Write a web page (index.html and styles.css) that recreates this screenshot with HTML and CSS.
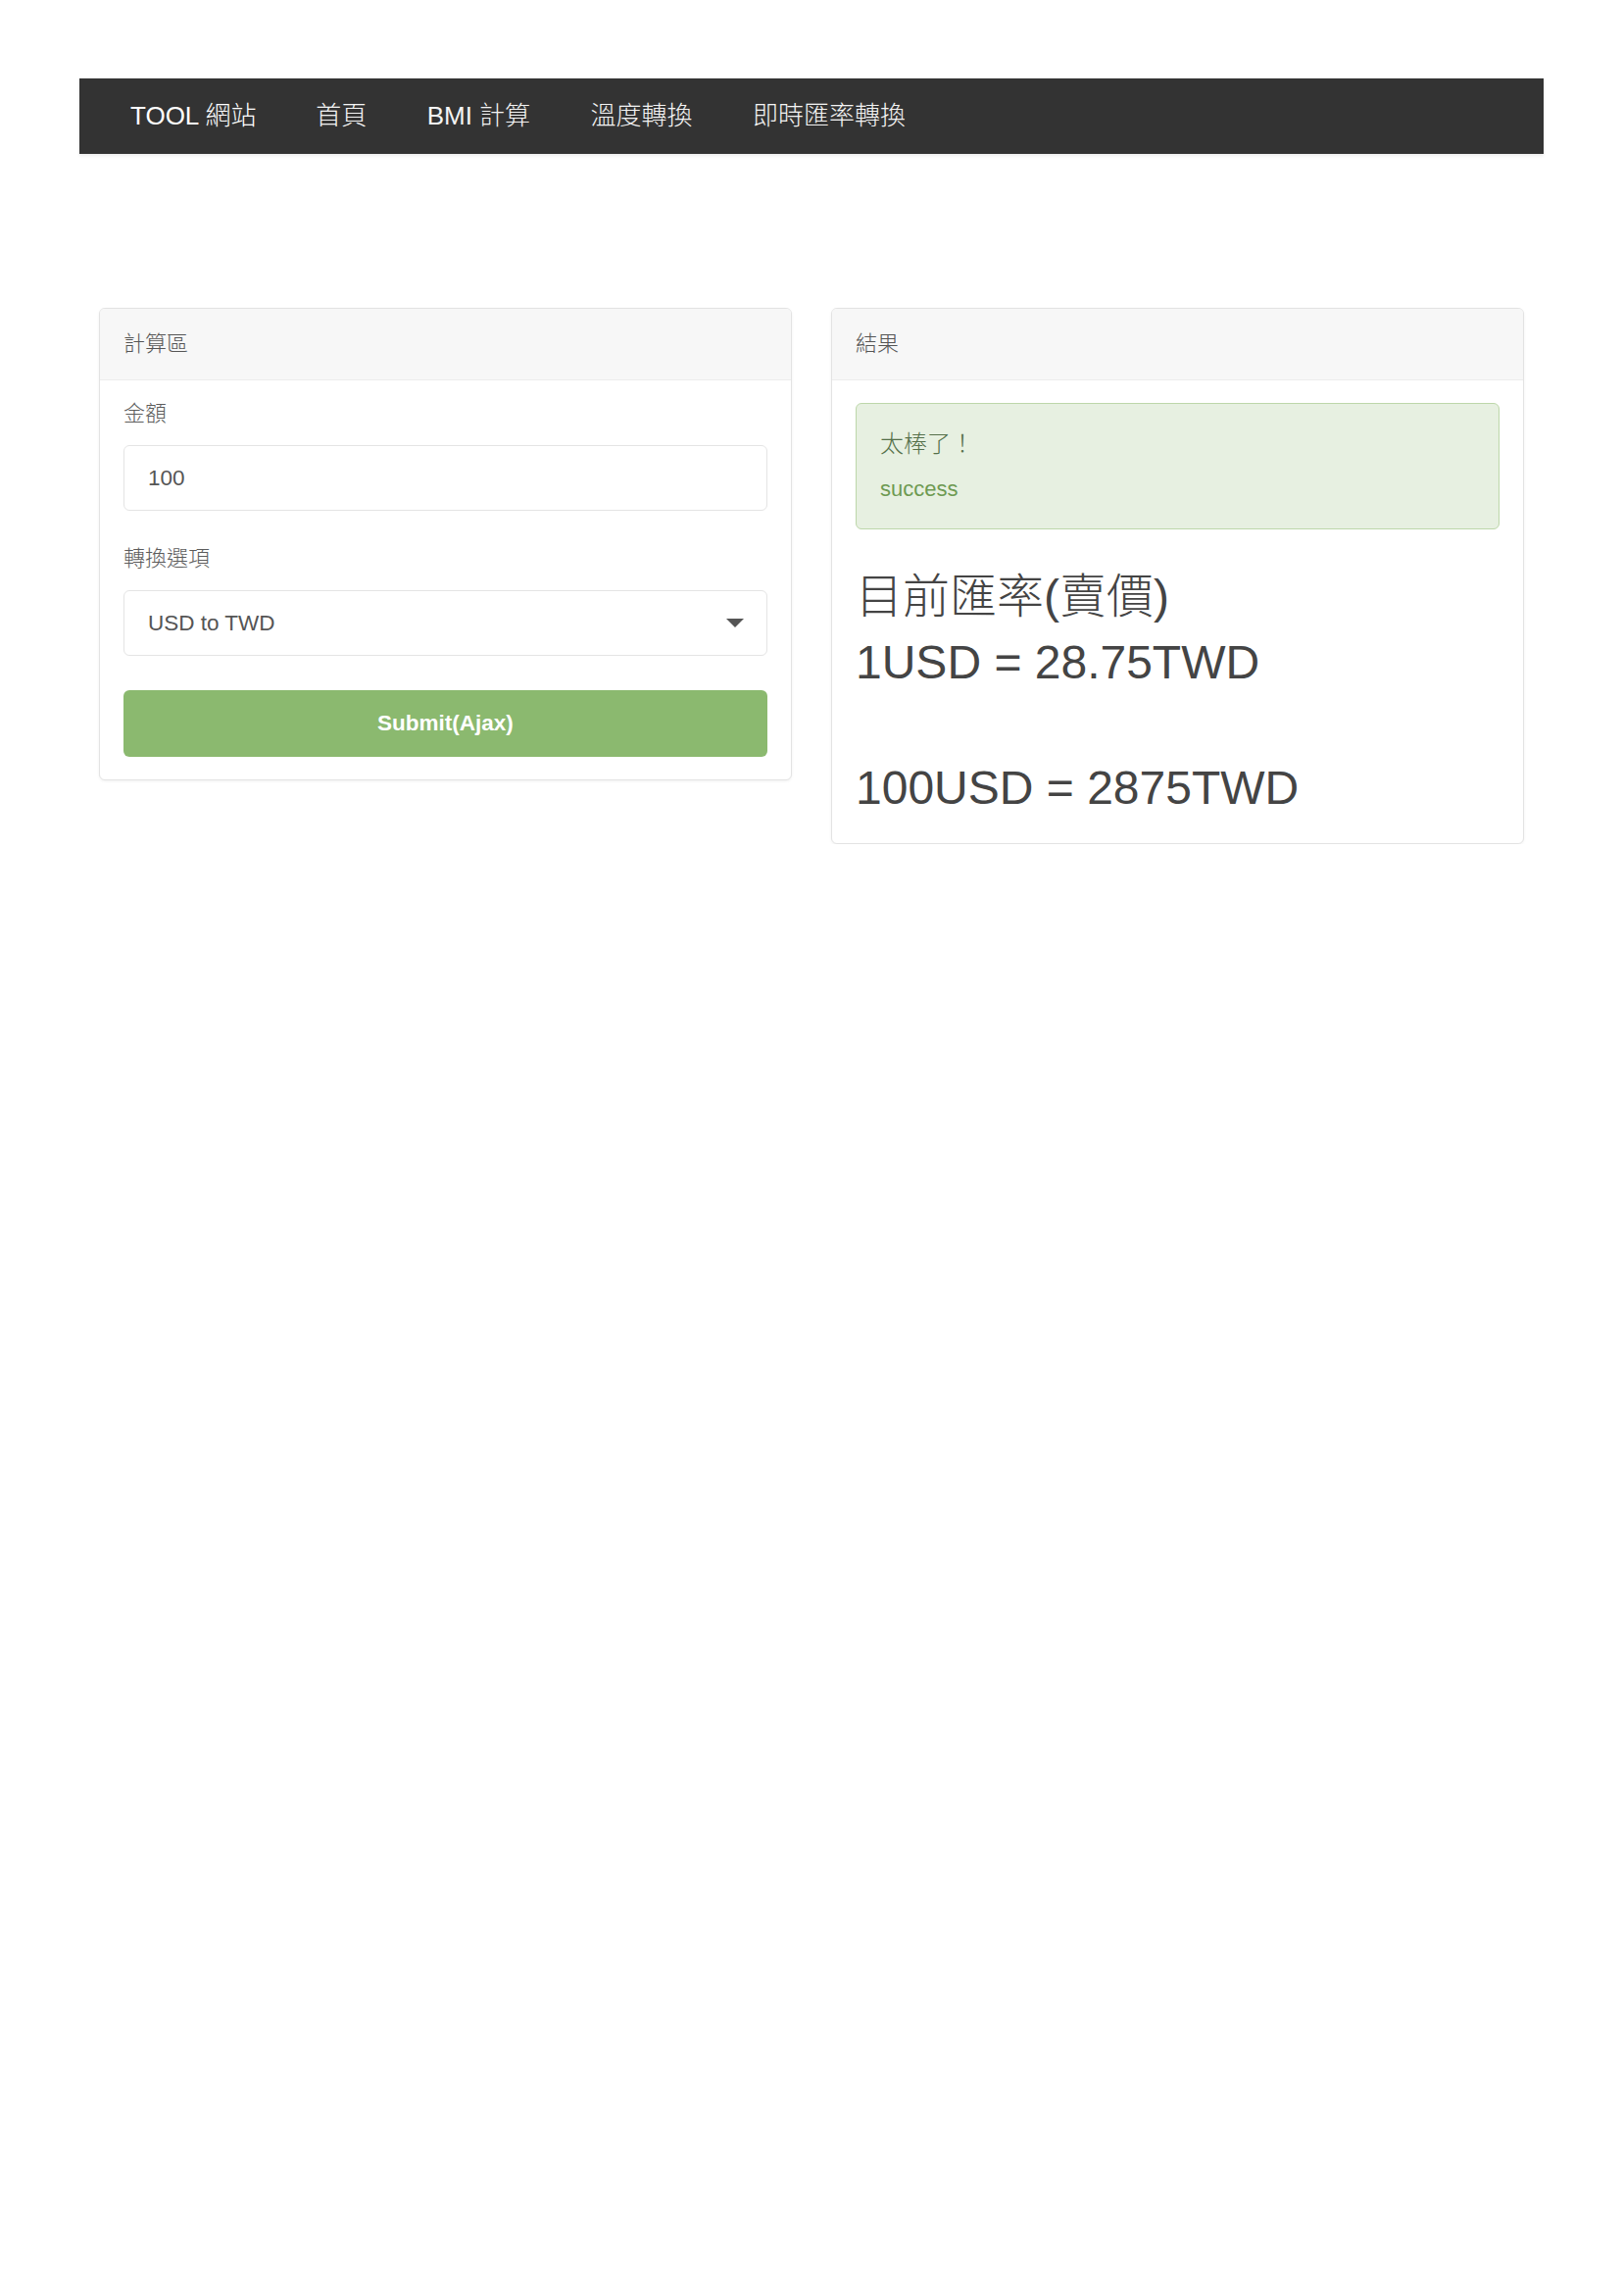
FILE: index.html
```html
<!DOCTYPE html>
<html lang="zh-Hant">
<head>
<meta charset="utf-8">
<title>即時匯率轉換</title>
<link rel="stylesheet" href="styles.css">
</head>
<body>
<nav class="navbar">
  <a class="nav-item brand" href="#">TOOL 網站</a>
  <a class="nav-item" href="#">首頁</a>
  <a class="nav-item" href="#">BMI 計算</a>
  <a class="nav-item" href="#">溫度轉換</a>
  <a class="nav-item" href="#">即時匯率轉換</a>
</nav>

<main class="content">
  <div class="col">
    <section class="panel">
      <div class="panel-heading">計算區</div>
      <div class="panel-body form-body">
        <div class="form-group">
          <label class="form-label" for="amount">金額</label>
          <input class="form-control" id="amount" type="text" value="100">
        </div>
        <div class="form-group">
          <label class="form-label" for="opt">轉換選項</label>
          <div class="select-wrap">
            <select class="form-control select" id="opt">
              <option>USD to TWD</option>
              <option>TWD to USD</option>
            </select>
            <span class="caret"></span>
          </div>
        </div>
        <button class="btn" type="button">Submit(Ajax)</button>
      </div>
    </section>
  </div>
  <div class="col">
    <section class="panel">
      <div class="panel-heading">結果</div>
      <div class="panel-body">
        <div class="alert">
          <h4 class="alert-title">太棒了！</h4>
          <p class="alert-text">success</p>
        </div>
        <div class="rate">
          <div class="rate-title">目前匯率(賣價)</div>
          <div>1USD = 28.75TWD<br><br>100USD = 2875TWD</div>
        </div>
      </div>
    </section>
  </div>
</main>
</body>
</html>
```

FILE: styles.css
```css
* { box-sizing: border-box; }

body {
  margin: 0;
  background: #fff;
  color: #333;
  font-family: "Liberation Sans", "Noto Sans CJK TC", sans-serif;
  font-weight: 300;
}

.navbar {
  width: 1494px;
  height: 77px;
  margin: 80px auto 0;
  padding: 0 22px;
  background: #333;
  display: flex;
  align-items: center;
  box-shadow: 0 2px 3px rgba(0, 0, 0, 0.08);
}

.nav-item {
  font-size: 26px;
  line-height: 77px;
  padding: 0 30.7px;
  color: #f4f4f4;
  text-decoration: none;
}

.nav-item.brand { color: #fff; padding-left: 30px; padding-right: 30px; }

.content {
  width: 1494px;
  margin: 157px auto 0;
  display: grid;
  grid-template-columns: 1fr 1fr;
  align-items: start;
}

.col { padding: 0 20px; }

.panel {
  background: #fff;
  border: 1px solid #e3e3e3;
  border-radius: 6px;
  box-shadow: 0 1px 3px rgba(0, 0, 0, 0.06);
  overflow: hidden;
}

.panel-heading {
  background: #f7f7f7;
  border-bottom: 1px solid #ececec;
  padding: 20px 24px;
  font-size: 22px;
  line-height: 32px;
  color: #555;
}

.panel-body { padding: 23px 24px 24px; }

.form-body { padding: 18px 24px 23px; }

.form-group + .form-group { margin-top: 33px; }

.form-label {
  display: block;
  font-size: 22px;
  line-height: 32px;
  margin-bottom: 16px;
  color: #5c5c5c;
}

.form-control {
  display: block;
  width: 100%;
  height: 67px;
  padding: 0 24px;
  border: 1.5px solid #e4e4e4;
  border-radius: 6px;
  background: #fff;
  font-family: inherit;
  font-weight: 400;
  font-size: 22.5px;
  color: #555;
  outline: none;
}

.select-wrap { position: relative; }

.select {
  appearance: none;
  -webkit-appearance: none;
}

.caret {
  position: absolute;
  right: 24px;
  top: 29px;
  width: 0;
  height: 0;
  border-left: 9px solid transparent;
  border-right: 9px solid transparent;
  border-top: 9px solid #555;
  pointer-events: none;
}

.btn {
  display: block;
  width: 100%;
  height: 68px;
  margin-top: 35px;
  border: none;
  border-radius: 6px;
  background: #8bb96f;
  color: #fff;
  font-family: inherit;
  font-size: 22.5px;
  font-weight: bold;
}

.alert {
  margin: 0 0 37px;
  padding: 25px 24px 24px;
  background: #e7f0e1;
  border: 1px solid #bdd7aa;
  border-radius: 6px;
}

.alert-title {
  margin: 0 0 14px;
  font-size: 24px;
  line-height: 32px;
  font-weight: 300;
  color: #55704a;
}

.alert-text {
  margin: 0;
  font-size: 22px;
  line-height: 32px;
  color: #6e9a52;
}

.rate {
  font-size: 48px;
  line-height: 64px;
  color: #444;
}

.rate-title { margin-bottom: 3px; }
```
